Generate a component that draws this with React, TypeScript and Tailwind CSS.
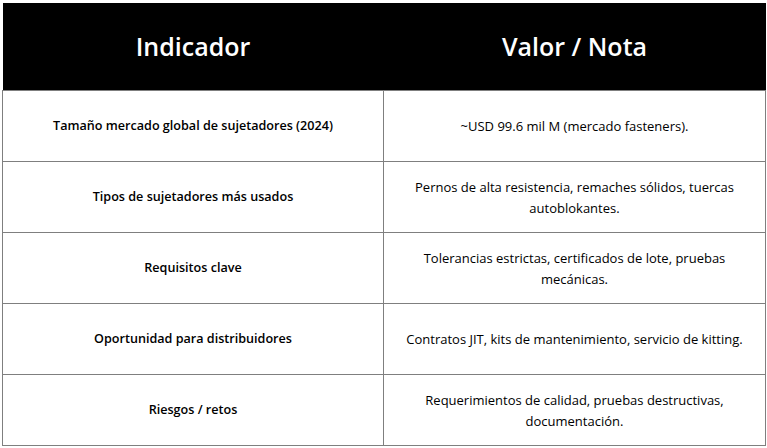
const rows = [
    { k: 'Tamaño mercado global de sujetadores (2024)', v: '~USD 99.6 mil M (mercado fasteners).' },
    { k: 'Tipos de sujetadores más usados', v: 'Pernos de alta resistencia, remaches sólidos, tuercas autoblokantes.' },
    { k: 'Requisitos clave', v: 'Tolerancias estrictas, certificados de lote, pruebas mecánicas.' },
    { k: 'Oportunidad para distribuidores', v: 'Contratos JIT, kits de mantenimiento, servicio de kitting.' },
    { k: 'Riesgos / retos', v: 'Requerimientos de calidad, pruebas destructivas, documentación.' },
];

export default function App() {
    return (
        <div className="min-h-[448px] bg-white pl-[2px] pt-[3px]" style={{ fontFamily: '"Open Sans", "Liberation Sans", sans-serif' }}>
            <table className="w-[764px] table-fixed border-collapse text-black">
                <thead>
                    <tr className="h-[87px] bg-black text-white">
                        <th className="w-[381px] text-center text-[25px] font-semibold">Indicador</th>
                        <th className="text-center text-[25px] font-semibold">Valor / Nota</th>
                    </tr>
                </thead>
                <tbody>
                    {rows.map((r, i) => (
                        <tr key={i} className="h-[71px]">
                            <td className="border border-[#7f7f7f] px-4 pt-[2px] text-center text-[12.6px] font-semibold">{r.k}</td>
                            <td className="border border-[#7f7f7f] px-4 pt-[2px] text-center text-[13px] leading-[21px]">{r.v}</td>
                        </tr>
                    ))}
                </tbody>
            </table>
        </div>
    );
}
